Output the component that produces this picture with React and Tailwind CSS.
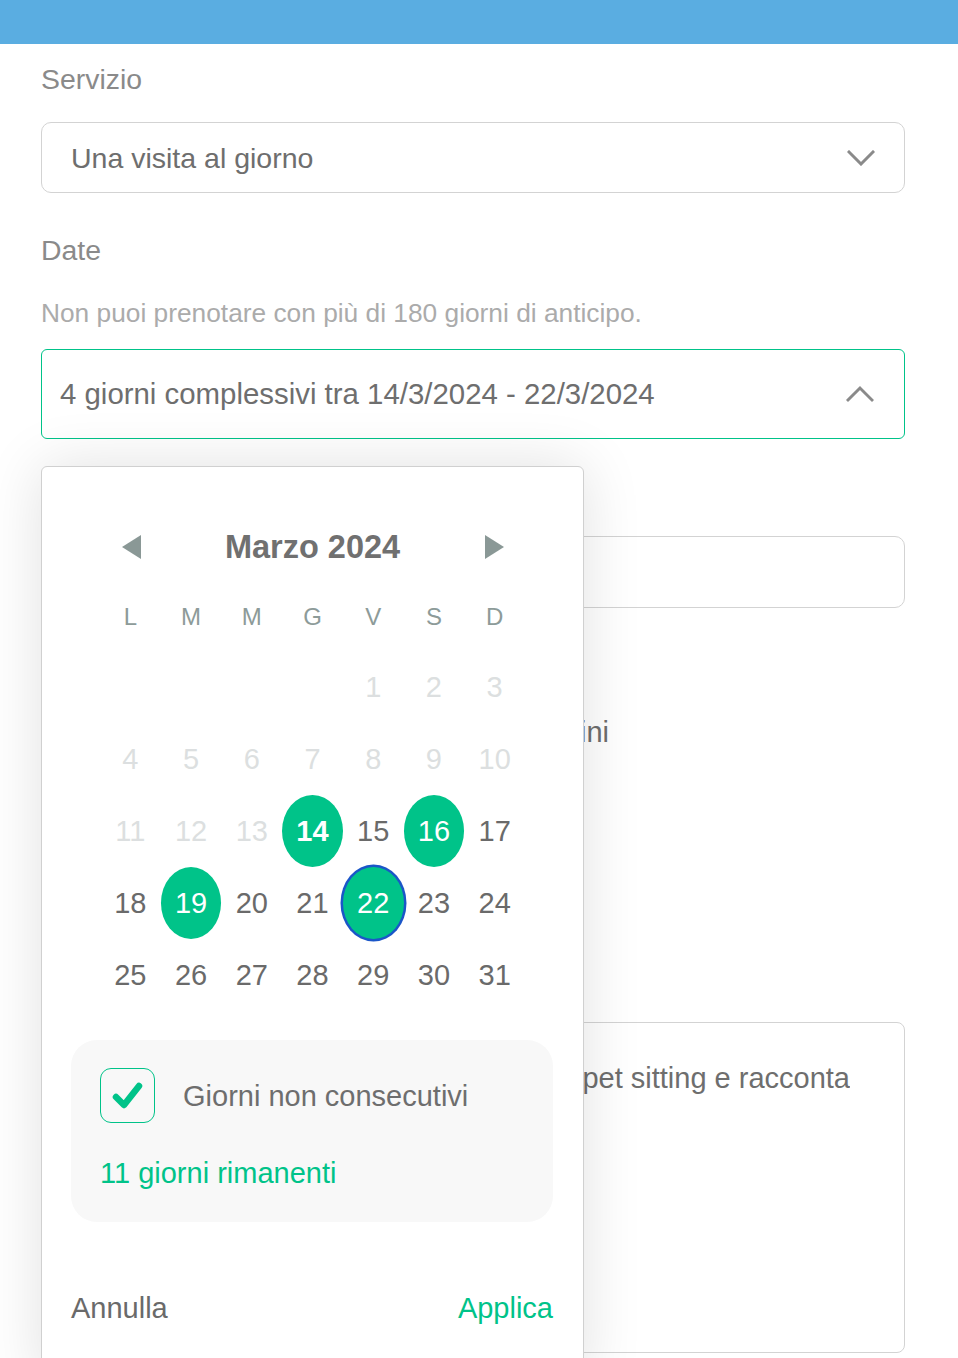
import React from "react";

const GREEN = "#00c389";

function ChevronDown() {
  return (
    <svg width="28" height="16" viewBox="0 0 28 16" fill="none">
      <polyline points="2,2 14,14 26,2" stroke="#8a8a8a" strokeWidth="3" strokeLinecap="square" />
    </svg>
  );
}

function ChevronUp() {
  return (
    <svg width="28" height="18" viewBox="0 0 28 18" fill="none">
      <polyline points="2,15 14,3 26,15" stroke="#8a8a8a" strokeWidth="3" strokeLinecap="square" />
    </svg>
  );
}

function Tri({ dir }) {
  return (
    <svg width="19" height="24" viewBox="0 0 19 24">
      {dir === "left" ? (
        <polygon points="19,0 19,24 0,12" fill="#8a9896" />
      ) : (
        <polygon points="0,0 0,24 19,12" fill="#8a9896" />
      )}
    </svg>
  );
}

const weekdays = ["L", "M", "M", "G", "V", "S", "D"];

function Day({ d }) {
  if (d === null) return <div className="h-[72px]" />;
  const disabled = d < 14;
  const selected = [14, 16, 19, 22].includes(d);
  const focused = d === 22;
  const bold = d === 14;
  return (
    <div className="h-[72px] flex items-center justify-center">
      {selected ? (
        <div
          className={
            "w-full h-full rounded-[50%] bg-[#00c389] text-white flex items-center justify-center " +
            (focused ? "ring-[2.5px] ring-[#1a56c8] " : "") +
            (bold ? "font-bold" : "")
          }
        >
          {d}
        </div>
      ) : (
        <span className={disabled ? "text-[#dcdfe0]" : "text-[#6a6a6a]"}>{d}</span>
      )}
    </div>
  );
}

export default function App() {
  const cells = [null, null, null, null];
  for (let i = 1; i <= 31; i++) cells.push(i);

  return (
    <div className="relative min-h-[1358px] h-[1358px] overflow-hidden bg-white font-['Liberation_Sans',Arial,sans-serif] text-[#6e6e6e]">
      <div className="h-[44px] bg-[#5aade1]" />

      <div className="pl-[41px] w-[905px]">
        <div className="pt-[18px] text-[28.4px] leading-[34px] text-[#8a8a8a]">Servizio</div>
        <div className="mt-[26px] h-[71px] border border-[#d3d3d3] rounded-[10px] flex items-center justify-between pl-[29px] pr-[29px]">
          <span className="text-[28.5px] leading-[34px] text-[#6e6e6e]">Una visita al giorno</span>
          <ChevronDown />
        </div>

        <div className="mt-[40px] text-[28.4px] leading-[34px] text-[#8a8a8a]">Date</div>
        <div className="mt-[30px] text-[26.3px] leading-[32px] text-[#ababab]">
          Non puoi prenotare con più di 180 giorni di anticipo.
        </div>
        <div className="mt-[20px] h-[90px] border border-[#00c389] rounded-[6px] flex items-center justify-between pl-[18px] pr-[30px]">
          <span className="text-[29.4px] leading-[34px] text-[#6e6e6e]">
            4 giorni complessivi tra 14/3/2024 - 22/3/2024
          </span>
          <ChevronUp />
        </div>

        <div className="mt-[97px] h-[72px] border border-[#d3d3d3] rounded-[10px]" />

        <div className="mt-[107px] w-[568px] flex justify-end overflow-hidden whitespace-nowrap text-[29px] leading-[34px] text-[#6e6e6e]">
          Indicazioni per i bambini
        </div>

        <div className="mt-[273px] h-[331px] border border-[#d3d3d3] rounded-[8px] pt-[38px]">
          <div className="w-[808px] flex justify-end overflow-hidden whitespace-nowrap text-[29px] leading-[34px] text-[#6e6e6e]">
            Descrivi le esigenze del servizio di pet sitting e racconta
          </div>
        </div>
      </div>

      {/* Date picker popup */}
      <div className="absolute left-[41px] top-[466px] w-[543px] bg-white border border-[#d0d0d0] rounded-[6px] shadow-[0_0_60px_rgba(0,0,0,0.12)] pb-[60px]">
        <div className="mx-auto w-[425px] pt-[56px]">
          <div className="grid grid-cols-7 h-[48px] items-center">
            <div className="flex justify-center pl-[3px]">
              <Tri dir="left" />
            </div>
            <div className="col-span-5 text-center text-[32.5px] leading-[40px] font-bold text-[#707070]">
              Marzo 2024
            </div>
            <div className="flex justify-center">
              <Tri dir="right" />
            </div>
          </div>

          <div className="mt-[28px] grid grid-cols-7 h-[36px] items-center text-[24px] leading-[30px] text-[#8d9b99]">
            {weekdays.map((w, i) => (
              <div key={i} className="text-center">
                {w}
              </div>
            ))}
          </div>

          <div className="mt-[16px] grid grid-cols-7 text-[29px] leading-[34px]">
            {cells.map((d, i) => (
              <Day key={i} d={d} />
            ))}
          </div>
        </div>

        <div className="mt-[29px] ml-[29px] w-[482px] bg-[#f8f8f8] rounded-[26px] pt-[28px] pl-[29px] pb-[32px]">
          <div className="flex items-center">
            <div className="w-[55px] h-[55px] border border-[#00c389] rounded-[11px] flex items-center justify-center">
              <svg width="34" height="30" viewBox="0 0 34 30" fill="none">
                <polyline
                  points="5,16 13,24 28,5"
                  stroke={GREEN}
                  strokeWidth="6.5"
                  strokeLinecap="round"
                  strokeLinejoin="round"
                />
              </svg>
            </div>
            <span className="ml-[28px] text-[29px] leading-[34px] text-[#6e6e6e]">Giorni non consecutivi</span>
          </div>
          <div className="mt-[33px] text-[29px] leading-[34px] text-[#00c389]">11 giorni rimanenti</div>
        </div>

        <div className="mt-[69px] ml-[29px] w-[482px] flex items-center justify-between text-[29px] leading-[34px]">
          <span className="text-[#6a6a6a]">Annulla</span>
          <span className="text-[#00c389]">Applica</span>
        </div>
      </div>
    </div>
  );
}
